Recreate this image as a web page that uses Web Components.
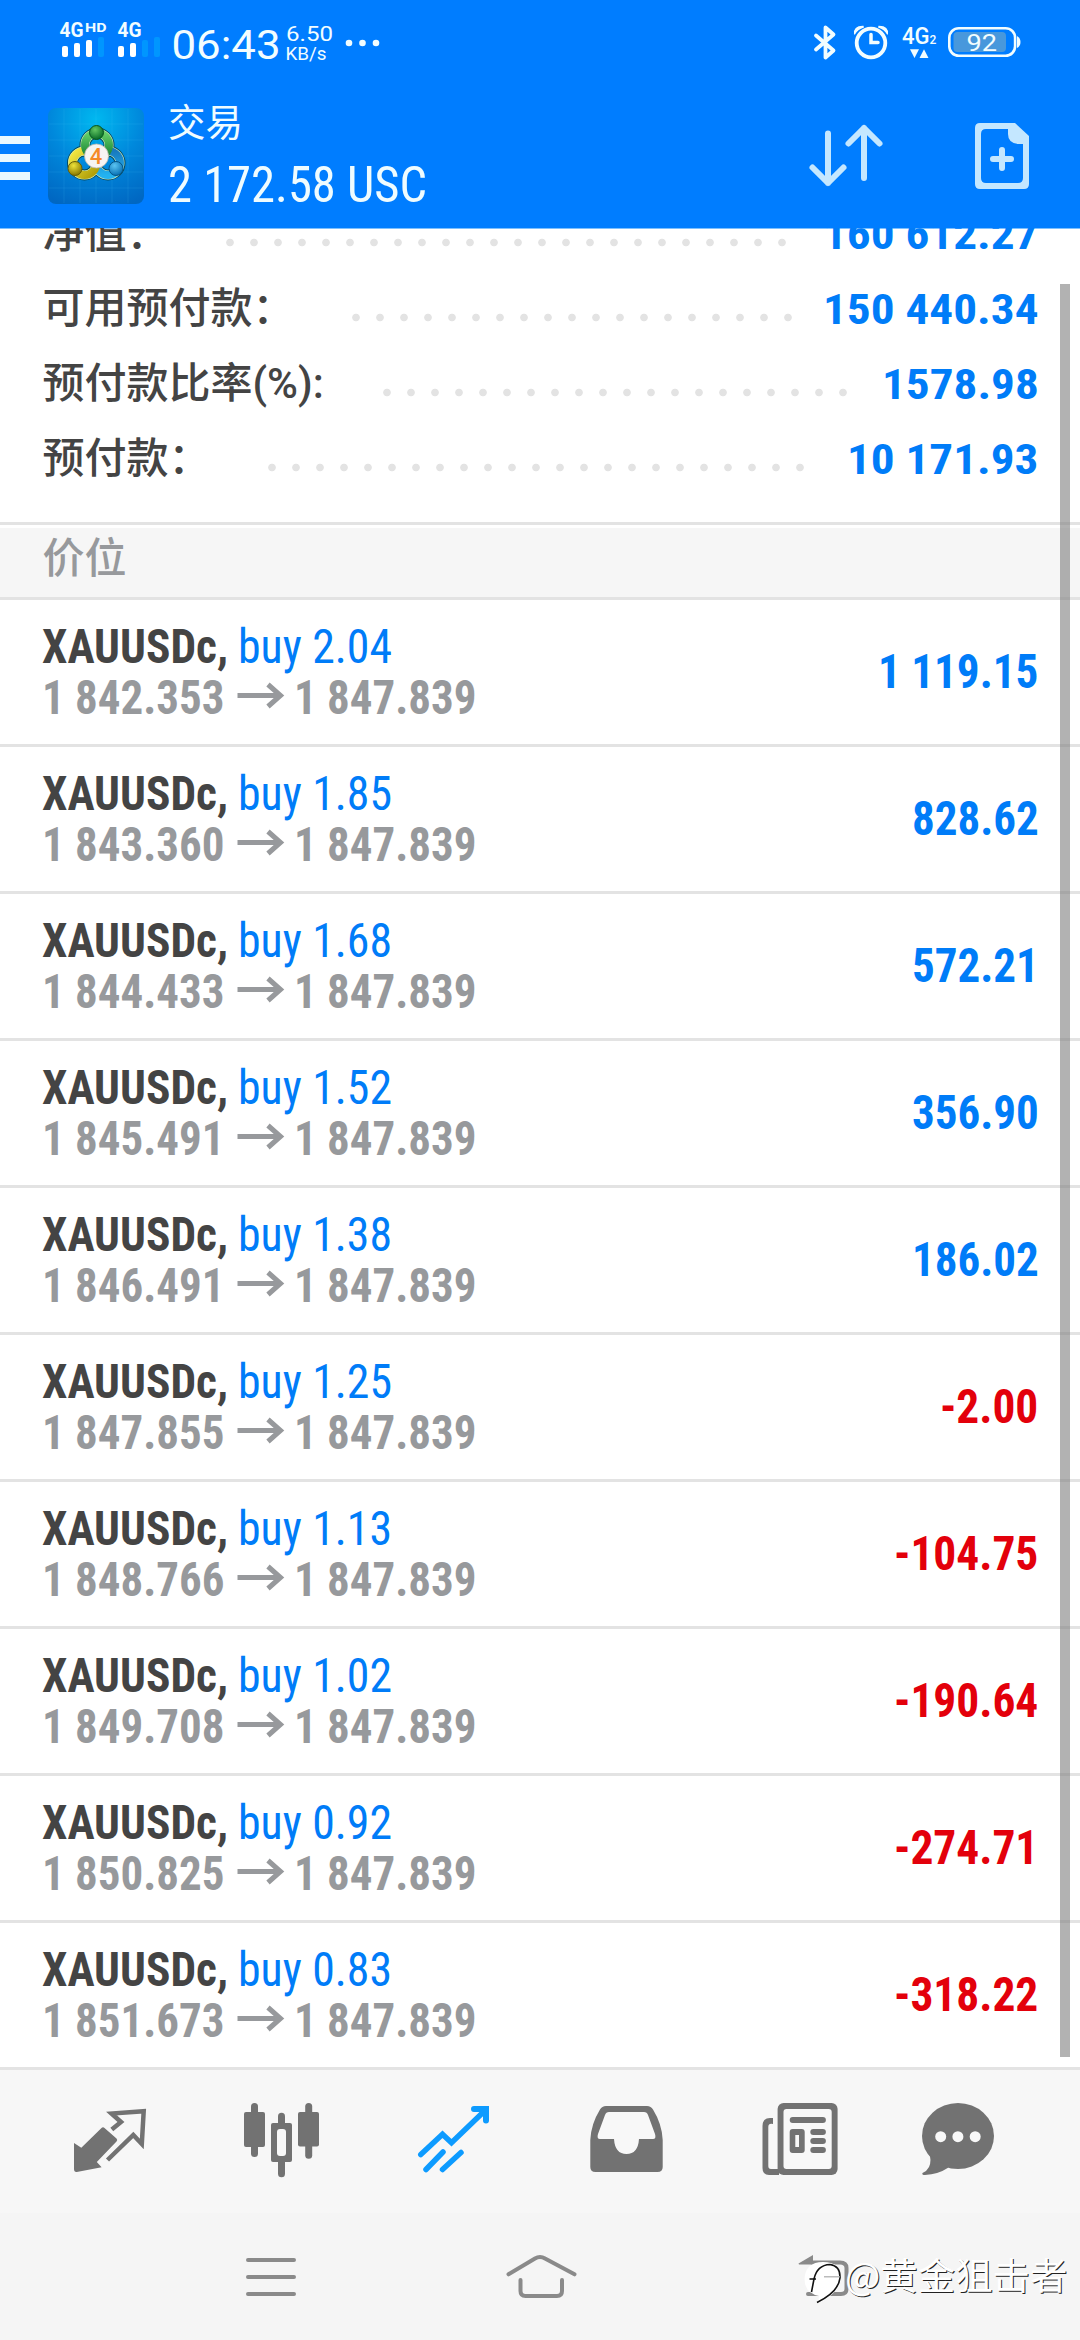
<!DOCTYPE html>
<html lang="zh-CN">
<head>
<meta charset="utf-8">
<title>交易</title>
<style>
html,body{margin:0;padding:0;background:#fff}
body{width:1080px;height:2340px;overflow:hidden;font-family:Roboto,"Noto Sans CJK SC",sans-serif}
</style>
</head>
<body>
<trade-app></trade-app>
<script>
const define=(name,css,render)=>customElements.define(name,class extends HTMLElement{
  connectedCallback(){
    if(this.shadowRoot)return;
    this.attachShadow({mode:'open'}).innerHTML='<style>'+css+'</style>'+render(this);
  }
});
const COND='"Roboto Condensed",Roboto,"Liberation Sans",sans-serif';

/* Single line of text set to an exact advance width */
define('fit-text',':host{display:block;flex:none}svg{display:block;overflow:visible}',el=>{
  const a=n=>el.getAttribute(n);
  const w=+a('w'),h=+a('h'),s=a('size');
  return `<svg width="${w}" height="${h}"><text x="0" y="${a('base')}" textLength="${w}" lengthAdjust="spacingAndGlyphs" font-size="${s}" font-weight="${a('weight')||400}" fill="currentColor" style='font-family:${a('wide')!==null?'Roboto,sans-serif':COND};font-stretch:75%'>${a('text')}</text></svg>`;
});

define('status-bar',`:host{display:flex;height:84px;color:#f2fdff}svg{display:block}text{fill:currentColor}`,()=>`
<svg width="1080" height="84" viewBox="0 0 1080 84" font-family="Roboto,sans-serif">
  <text x="59.5" y="37" font-size="21" font-weight="700" textLength="24" lengthAdjust="spacingAndGlyphs">4G</text>
  <text x="85" y="32" font-size="13.5" font-weight="700" textLength="21.5" lengthAdjust="spacingAndGlyphs">HD</text>
  <text x="117.5" y="37" font-size="21" font-weight="700" textLength="24" lengthAdjust="spacingAndGlyphs">4G</text>
  <g fill="#fff"><rect x="62" y="46" width="6" height="11" rx="2"/><rect x="74" y="43" width="6" height="14" rx="2"/><rect x="86" y="40" width="6" height="17" rx="2"/><rect x="118" y="46" width="6" height="11" rx="2"/><rect x="130" y="43" width="6" height="14" rx="2"/></g>
  <g fill="#0096ff"><rect x="98" y="37" width="6" height="20" rx="2"/><rect x="142" y="40" width="6" height="17" rx="2"/><rect x="154" y="37" width="6" height="20" rx="2"/></g>
  <text x="171.500" y="58.500" font-size="40.500" textLength="109" lengthAdjust="spacingAndGlyphs">06:43</text>
  <text x="286" y="41" font-size="21" textLength="47" lengthAdjust="spacingAndGlyphs">6.50</text>
  <text x="285.500" y="60" font-size="18.500" textLength="41" lengthAdjust="spacingAndGlyphs">KB/s</text>
  <g fill="#f2fdff"><circle cx="349" cy="43" r="3.300"/><circle cx="362.500" cy="43" r="3.300"/><circle cx="376" cy="43" r="3.300"/></g>
  <path d="M816 35.500 833.500 50.500 825.500 57.500V27.500L833.500 34.500 816 49.500" fill="none" stroke="#f2fdff" stroke-width="3.800" stroke-linejoin="round" stroke-linecap="round"/>
  <g fill="none" stroke="#f2fdff"><circle cx="871" cy="43" r="14.300" stroke-width="3.800"/><path d="M871 34.500V42.500H878" stroke-width="3.500" stroke-linecap="round"/></g>
  <path d="M854 34.500Q853 25.500 863.500 25.800L864 27.500Q857.500 29.500 855 34.500ZM888 34.500Q889 25.500 878.500 25.800L878 27.500Q884.500 29.500 887 34.500Z" fill="#f2fdff"/>
  <text x="902" y="44" font-size="24" font-weight="500" textLength="27.500" lengthAdjust="spacingAndGlyphs">4G</text>
  <text x="929.500" y="44" font-size="12" font-weight="500">2</text>
  <path d="M910 49.300H919L914.500 58ZM919.500 58H928.500L924 49.300Z" fill="#f2fdff"/>
  <rect x="949.300" y="28.200" width="65.800" height="27.600" rx="9.500" fill="none" stroke="#f2fdff" stroke-width="2.600"/>
  <rect x="953.500" y="32" width="52.500" height="20" rx="4" fill="#4898dc"/>
  <path d="M1017 36Q1020.500 38 1020.500 42T1017 48Z" fill="#f2fdff"/>
  <text x="966.500" y="51" font-size="24.500" textLength="30.500" lengthAdjust="spacingAndGlyphs">92</text>
</svg>`);

define('terminal-logo',':host{display:block;flex:none;width:96px;height:96px}svg{display:block}',()=>`
<svg width="96" height="96" viewBox="0 0 96 96">
  <defs>
    <radialGradient id="bg" cx=".5" cy=".12" r=".95"><stop offset="0" stop-color="#00b8f0"/><stop offset=".5" stop-color="#0088dc"/><stop offset="1" stop-color="#0067c2"/></radialGradient>
    <linearGradient id="g" x2="0" y2="1"><stop stop-color="#65cf69"/><stop offset="1" stop-color="#127f31"/></linearGradient>
    <linearGradient id="y" x2="1" y2="1"><stop stop-color="#f4ea45"/><stop offset="1" stop-color="#ac9a04"/></linearGradient>
    <linearGradient id="b" x2="0" y2="1"><stop stop-color="#1879be"/><stop offset="1" stop-color="#23b2f0"/></linearGradient>
    <radialGradient id="gb" cx=".4" cy=".3" r=".7"><stop stop-color="#63c763"/><stop offset="1" stop-color="#086c27"/></radialGradient>
    <radialGradient id="yb" cx=".4" cy=".3" r=".7"><stop stop-color="#eee23a"/><stop offset="1" stop-color="#877800"/></radialGradient>
    <radialGradient id="bb" cx=".4" cy=".3" r=".7"><stop stop-color="#5bc4f2"/><stop offset="1" stop-color="#0871b4"/></radialGradient>
  </defs>
  <rect width="96" height="96" rx="8" fill="url(#bg)"/>
  <path d="M16 1V95M32 1V95M48 1V95M64 1V95M80 1V95M1 16H95M1 32H95M1 48H95M1 64H95M1 80H95" stroke="#4dd0ff" stroke-opacity=".13"/>
  <g fill="none" stroke-width="11" stroke="#06495b"><circle cx="49" cy="37" r="12"/><circle cx="36.500" cy="55" r="12"/><circle cx="60" cy="55" r="12"/></g>
  <g fill="none" stroke-width="9" stroke="#cfeec4"><circle cx="60" cy="55" r="12"/><circle cx="36.500" cy="55" r="12"/><circle cx="49" cy="37" r="12"/></g>
  <g fill="none" stroke-width="8"><circle cx="60" cy="55" r="12" stroke="url(#b)"/><circle cx="36.500" cy="55" r="12" stroke="url(#y)"/><circle cx="49" cy="37" r="12" stroke="url(#g)"/></g>
  <circle cx="48.500" cy="24.500" r="7" fill="url(#gb)" stroke="#07551f"/>
  <circle cx="27" cy="60.500" r="7" fill="url(#yb)" stroke="#655e08"/>
  <circle cx="68" cy="60.500" r="7" fill="url(#bb)" stroke="#055385"/>
  <circle cx="48.500" cy="48" r="12" fill="#f6f4f2" stroke="#bdb7ac" stroke-width=".8"/>
  <text x="48" y="55.500" text-anchor="middle" font-family="Roboto,sans-serif" font-size="22" font-weight="500" fill="#f58a28">4</text>
</svg>`);

define('app-bar',`
:host{display:flex;height:144px;color:#effcff}
.menu{flex:none;width:48px;height:144px}
.logo{padding-top:24px}
.titles{flex:1;padding:9px 0 0 24px;display:flex;flex-direction:column}
.title{font:400 37.500px/54px "Noto Sans CJK SC",sans-serif;height:58px}
svg{display:block}.acts{flex:none}`,()=>`
<svg class="menu" viewBox="0 84 48 144"><path d="M0 136H30V144H0ZM0 154H30V162H0ZM0 172H30V180H0Z" fill="#e9f8ff"/></svg>
<div class="logo"><terminal-logo></terminal-logo></div>
<div class="titles"><div class="title">交易</div><fit-text w="259" h="60" base="51" size="50" text="2 172.58 USC"></fit-text></div>
<svg class="acts" width="288" height="144" viewBox="792 84 288 144" fill="none" stroke="#c4e7ff" stroke-width="6" stroke-linecap="round" stroke-linejoin="round">
  <path d="M828 133.500V183M812.500 167.500 828 183 843.500 167.500M864 178V128M848.500 143.500 864 128 879.500 143.500M1002 150V168M993 159H1011"/>
  <path fill="#c4e7ff" stroke="none" fill-rule="evenodd" d="M980 123H1015L1029 136V184Q1029 189 1024 189H980Q975 189 975 184V128Q975 123 980 123ZM986 129Q981 129 981 134V178Q981 183 986 183H1018Q1023 183 1023 178V144H1018Q1008 143 1008 134V129Z"/>
</svg>`);

define('margin-row',`
:host{display:flex;height:75px;align-items:flex-start}
.l{flex:none;font:500 42px/76px Roboto,"Noto Sans CJK SC",sans-serif;color:#444;white-space:nowrap;height:75px}
.d{flex:none;height:75px;background:radial-gradient(circle at 12px 46.500px,#e3e3e3 3.400px,transparent 4.200px) 0 0/24px 75px repeat-x}
.v{margin-left:auto;color:#007cf8}`,el=>{
  const a=n=>el.getAttribute(n);const v=a('value');
  let w=0;for(const c of v)w+=c===' '?10.5:c==='.'?12.2:24.1;
  return `<div class="l" style="width:${a('x')-12-42.5}px"><slot></slot></div><div class="d" style="width:${a('n')*24}px"></div><fit-text class="v" wide w="${w}" h="75" base="53" size="42" weight="700" text="${v}"></fit-text>`;
});

define('account-summary',`
:host{display:block;height:294px;overflow:hidden;background:#fff;box-shadow:inset 0 1px #7cc0ff}
.rows{display:flex;flex-direction:column;margin-top:-32px;padding:0 41.500px 0 42.500px}`,()=>`
<div class="rows">
<margin-row x="230.400" n="24" value="160 612.27">净值：</margin-row>
<margin-row x="356" n="19" value="150 440.34">可用预付款：</margin-row>
<margin-row x="387.400" n="20" value="1578.98">预付款比率(%):</margin-row>
<margin-row x="272" n="23" value="10 171.93">预付款：</margin-row>
</div>`);

define('section-title',`
:host{display:block;box-sizing:border-box;height:78px;border-top:3px solid #e3e3e3;border-bottom:3px solid #e3e3e3;background:#f6f6f6;box-shadow:inset 0 3px #fff;
padding-left:42.500px;font:500 42px/60px "Noto Sans CJK SC",sans-serif;color:#97999c}`,()=>`<slot></slot>`);

define('position-row',`
:host{display:flex;box-sizing:border-box;height:147px;border-bottom:3px solid #e3e3e3;padding:0 41.500px 0 42px;justify-content:space-between;background:#fff}
.i{display:flex;flex-direction:column}.a,.b{display:flex}.sym{color:#444;width:196px}.buy{color:#007cf8}
.b{color:#97999c}.ar{flex:none;width:69px;height:60px}
.p{color:#007cf8}.neg{color:#e3000b}svg{display:block}`,el=>{
  const a=n=>el.getAttribute(n);const p=a('profit');
  let w=0;for(const c of p)w+=c===' '?10.6:c==='.'?11.8:c==='-'?17.5:23;
  return `<div class="i"><div class="a"><fit-text class="sym" w="186" h="75" base="63" size="48" weight="700" text="XAUUSDc,"></fit-text><fit-text class="buy" w="154" h="75" base="63" size="48" text="buy ${a('lots')}"></fit-text></div>
  <div class="b"><fit-text w="182.500" h="60" base="39" size="48" weight="700" text="${a('open')}"></fit-text><svg class="ar" viewBox="224.500 675 69 60" fill="none" stroke="#97999c" stroke-width="5"><path d="M237 695.500H279.500M267.500 684.500 280 695.500 267.500 706.500"/></svg><fit-text w="182.500" h="60" base="39" size="48" weight="700" text="1 847.839"></fit-text></div></div>
  <fit-text class="p ${p[0]==='-'?'neg':''}" w="${w}" h="120" base="88" size="48" weight="700" text="${p}"></fit-text>`;
});

const ICONS=[
`<path d="M74 2143 81.300 2147.700 101.500 2128Q103 2126.500 104.500 2128L116.500 2138.500Q118 2140 116.500 2141.500L96.800 2162 101.600 2167.300 76.800 2172Q74 2172.300 74 2169Z"/><path d="M111.800 2129.500 121 2122 111.500 2113.500 143.700 2111.200 141.800 2144 133.300 2135 107.500 2160" fill="none" stroke="#727272" stroke-width="4.500"/>`,
`<rect x="244" y="2112" width="21" height="35" rx="2"/><rect x="251" y="2103" width="7" height="54" rx="3.500"/><rect x="298" y="2112" width="21" height="34.500" rx="2"/><rect x="305.200" y="2103" width="7" height="55.700" rx="3.500"/><rect x="278" y="2112.700" width="7" height="64.500" rx="3.500"/><rect x="271" y="2123" width="21" height="39" rx="2"/><rect x="277" y="2129" width="9" height="27" rx="3" fill="#f8f8f8"/>`,
`<g fill="none" stroke="#0d9bff" stroke-width="5.500" stroke-linecap="round"><path d="M420.800 2154.500 442.500 2134.200 451.500 2142.800 485.500 2110M426 2169.500 443 2152M442.500 2169.500 461 2152.500"/><path d="M474 2109H486V2120.500" stroke-width="6"/></g>`,
`<path d="M590.300 2140Q591 2124 600 2109.500Q602 2106 606 2106H647Q651 2106 653 2109.500Q662 2124 662.700 2140V2167Q662.700 2172 657.500 2172H595.500Q590.300 2172 590.300 2167Z"/><path fill="#f8f8f8" d="M609 2112H644Q647 2112 648 2115L655 2134Q656.500 2139 653 2139H639Q638 2154 626.500 2154T614 2139H600Q596.500 2139 598 2134L605 2115Q606 2112 609 2112Z"/>`,
`<rect x="777.600" y="2103" width="60" height="72" rx="6"/><rect x="783.500" y="2109" width="48.200" height="60" rx="3" fill="#f8f8f8"/><path d="M773 2118V2124Q768.300 2123 768.300 2127V2166Q768.300 2169 771 2169H779V2175H769Q762.500 2175 762.500 2168V2126Q762.500 2118 770 2118Z"/><rect x="789.700" y="2117" width="36.200" height="6" rx="3"/><rect x="789.700" y="2129" width="15" height="24" rx="3"/><rect x="795.300" y="2135" width="3.700" height="12" fill="#f8f8f8"/><rect x="810.300" y="2129" width="15.600" height="6" rx="3"/><rect x="810.300" y="2138" width="15.600" height="6" rx="3"/><rect x="810.300" y="2147" width="15.600" height="6" rx="3"/>`,
`<ellipse cx="958" cy="2136" rx="36" ry="33"/><path d="M929 2154Q932 2160 929 2167 927 2171 922.500 2173 921.500 2175 925 2175 938 2174.500 948.500 2167.500Z"/><g fill="#f8f8f8"><circle cx="940.700" cy="2136.700" r="5.500"/><circle cx="957.900" cy="2136.700" r="5.500"/><circle cx="975.200" cy="2136.700" r="5.500"/></g>`];
define('tab-bar',`:host{display:flex;height:143px;background:#f7f7f7;padding:0 24px}svg{display:block;flex:none}`,()=>
  ICONS.map((s,i)=>`<svg width="172" height="143" viewBox="${24+i*172} 2070 172 143" fill="#727272">${s}</svg>`).join(''));

define('system-nav',`
:host{display:flex;height:127px;background:#f5f5f5;position:relative}svg{display:block}
.mark{position:absolute;left:803px;top:42px;display:flex;align-items:flex-start;color:#fff;white-space:nowrap}
.t{font:400 37.400px/44px "Noto Sans CJK SC",sans-serif;text-shadow:1px 1px 0 #222;margin:-3px 0 0 2px}`,()=>`
<svg width="1080" height="127" viewBox="0 2213 1080 127" fill="none" stroke="#8a8a8a" stroke-width="4" stroke-linecap="round">
  <path d="M248 2260H294M248 2277H294M248 2294H294M508.500 2274.300 535 2258.500Q540 2255.500 545 2258.500L574.500 2274.300M520.500 2280V2291Q520.500 2296 525.500 2296H557Q562 2296 562 2291V2280"/>
  <path d="M812 2262.500H840Q846.500 2262.500 846.500 2268V2289Q846.500 2294 841 2294H808"/><path d="M798.500 2263.500 813 2255V2264.500H799Z" fill="#8a8a8a" stroke="none"/>
</svg>
<div class="mark"><svg width="40" height="50" viewBox="803 2255 40 50"><path d="M823 2262Q841 2262 841 2278 840 2293 818 2303L819 2296Q804.500 2293 804.500 2279 805.500 2262 823 2262Z" fill="#fff"/><path d="M811.500 2292 814 2279Q817 2265 830 2264.500 840.500 2266 840 2278 838.500 2292 817 2302.500" fill="none" stroke="#111" stroke-width="1.600"/><path d="M809.500 2279H816" stroke="#111" stroke-width="1.500"/><path d="M824 2276.800H840" stroke="#aaa" stroke-width="1.200"/></svg><span class="t">@黄金狙击者</span></div>`);

const POS=[["2.04","1 842.353","1 119.15"],["1.85","1 843.360","828.62"],["1.68","1 844.433","572.21"],["1.52","1 845.491","356.90"],["1.38","1 846.491","186.02"],["1.25","1 847.855","-2.00"],["1.13","1 848.766","-104.75"],["1.02","1 849.708","-190.64"],["0.92","1 850.825","-274.71"],["0.83","1 851.673","-318.22"]];
define('trade-app',`
:host{display:flex;flex-direction:column;width:1080px;height:2340px;position:relative;overflow:hidden}
header{background:#007dff;height:228px;flex:none}
.bar{position:absolute;left:1060px;top:284px;width:10px;height:1773px;background:rgba(127,127,127,.6)}`,()=>`
<header><status-bar></status-bar><app-bar></app-bar></header>
<account-summary></account-summary>
<section-title>价位</section-title>
<main>${POS.map(p=>`<position-row lots="${p[0]}" open="${p[1]}" profit="${p[2]}"></position-row>`).join('')}</main>
<tab-bar></tab-bar><system-nav></system-nav><div class="bar"></div>`);
</script>
</body>
</html>
